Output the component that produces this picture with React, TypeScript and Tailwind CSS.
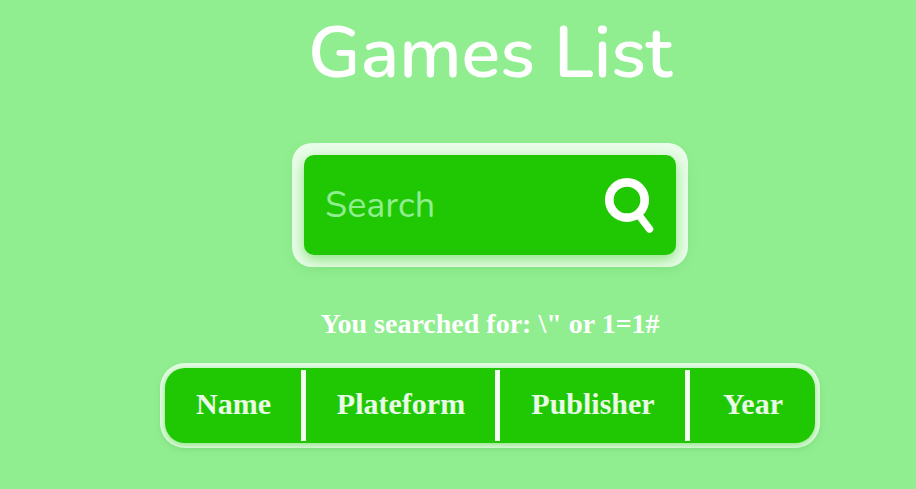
const columns = [
  { label: "Name", width: "w-[141px]" },
  { label: "Plateform", width: "w-[194px]" },
  { label: "Publisher", width: "w-[190px]" },
  { label: "Year", width: "w-[125px]" },
];

function SearchIcon() {
  return (
    <svg width="56" height="60" viewBox="0 0 56 60" fill="none" stroke="white" aria-hidden>
      <circle cx="27" cy="25" r="17.7" strokeWidth="8.7" />
      <line x1="39.3" y1="40.8" x2="49.5" y2="54" strokeWidth="7.5" strokeLinecap="round" />
    </svg>
  );
}

export default function App() {
  return (
    <div className="h-[489px] w-[916px] overflow-hidden bg-[#90ee90]">
      <div className="flex w-[980px] flex-col items-center">
        <h1 className="mt-[13px] font-['Nunito','Lato',sans-serif] text-[72px] leading-[80px] font-semibold text-white">
          Games List
        </h1>

        <div className="mt-[50px] rounded-[20px] bg-white/80 p-3 shadow-[0_4px_16px_rgba(0,0,0,0.04)]">
          <div className="flex h-[100px] w-[372px] items-center justify-between rounded-[10px] bg-[#20c803] pr-[20px] pl-[21px] shadow-[0_5px_14px_rgba(32,200,5,0.45)]">
            <span className="pt-[2px] font-['Nunito','Lato',sans-serif] text-[36px] text-[#90ee90]">Search</span>
            <SearchIcon />
          </div>
        </div>

        <p className="mt-[39px] font-['Liberation_Serif',serif] text-[28px] leading-[36px] font-bold text-white">
          {'You searched for: \\" or 1=1#'}
        </p>

        <div className="mt-[21px] rounded-[25px] bg-white/75 p-[5px] shadow-[0_3px_10px_rgba(0,0,0,0.05)]">
          <div className="flex h-[75px] items-center rounded-[20px] bg-[#20c803] shadow-[0_2px_6px_rgba(32,200,5,0.45)]">
            {columns.map((col, i) => (
              <div
                key={col.label}
                className={`flex h-[71px] items-center justify-center pb-[5px] pl-px font-['Liberation_Serif',serif] text-[30px] font-bold text-white/90 ${col.width} ${
                  i < columns.length - 1 ? "border-r-[5px] border-[#f3fdf0]" : ""
                }`}
              >
                {col.label}
              </div>
            ))}
          </div>
        </div>
      </div>
    </div>
  );
}
